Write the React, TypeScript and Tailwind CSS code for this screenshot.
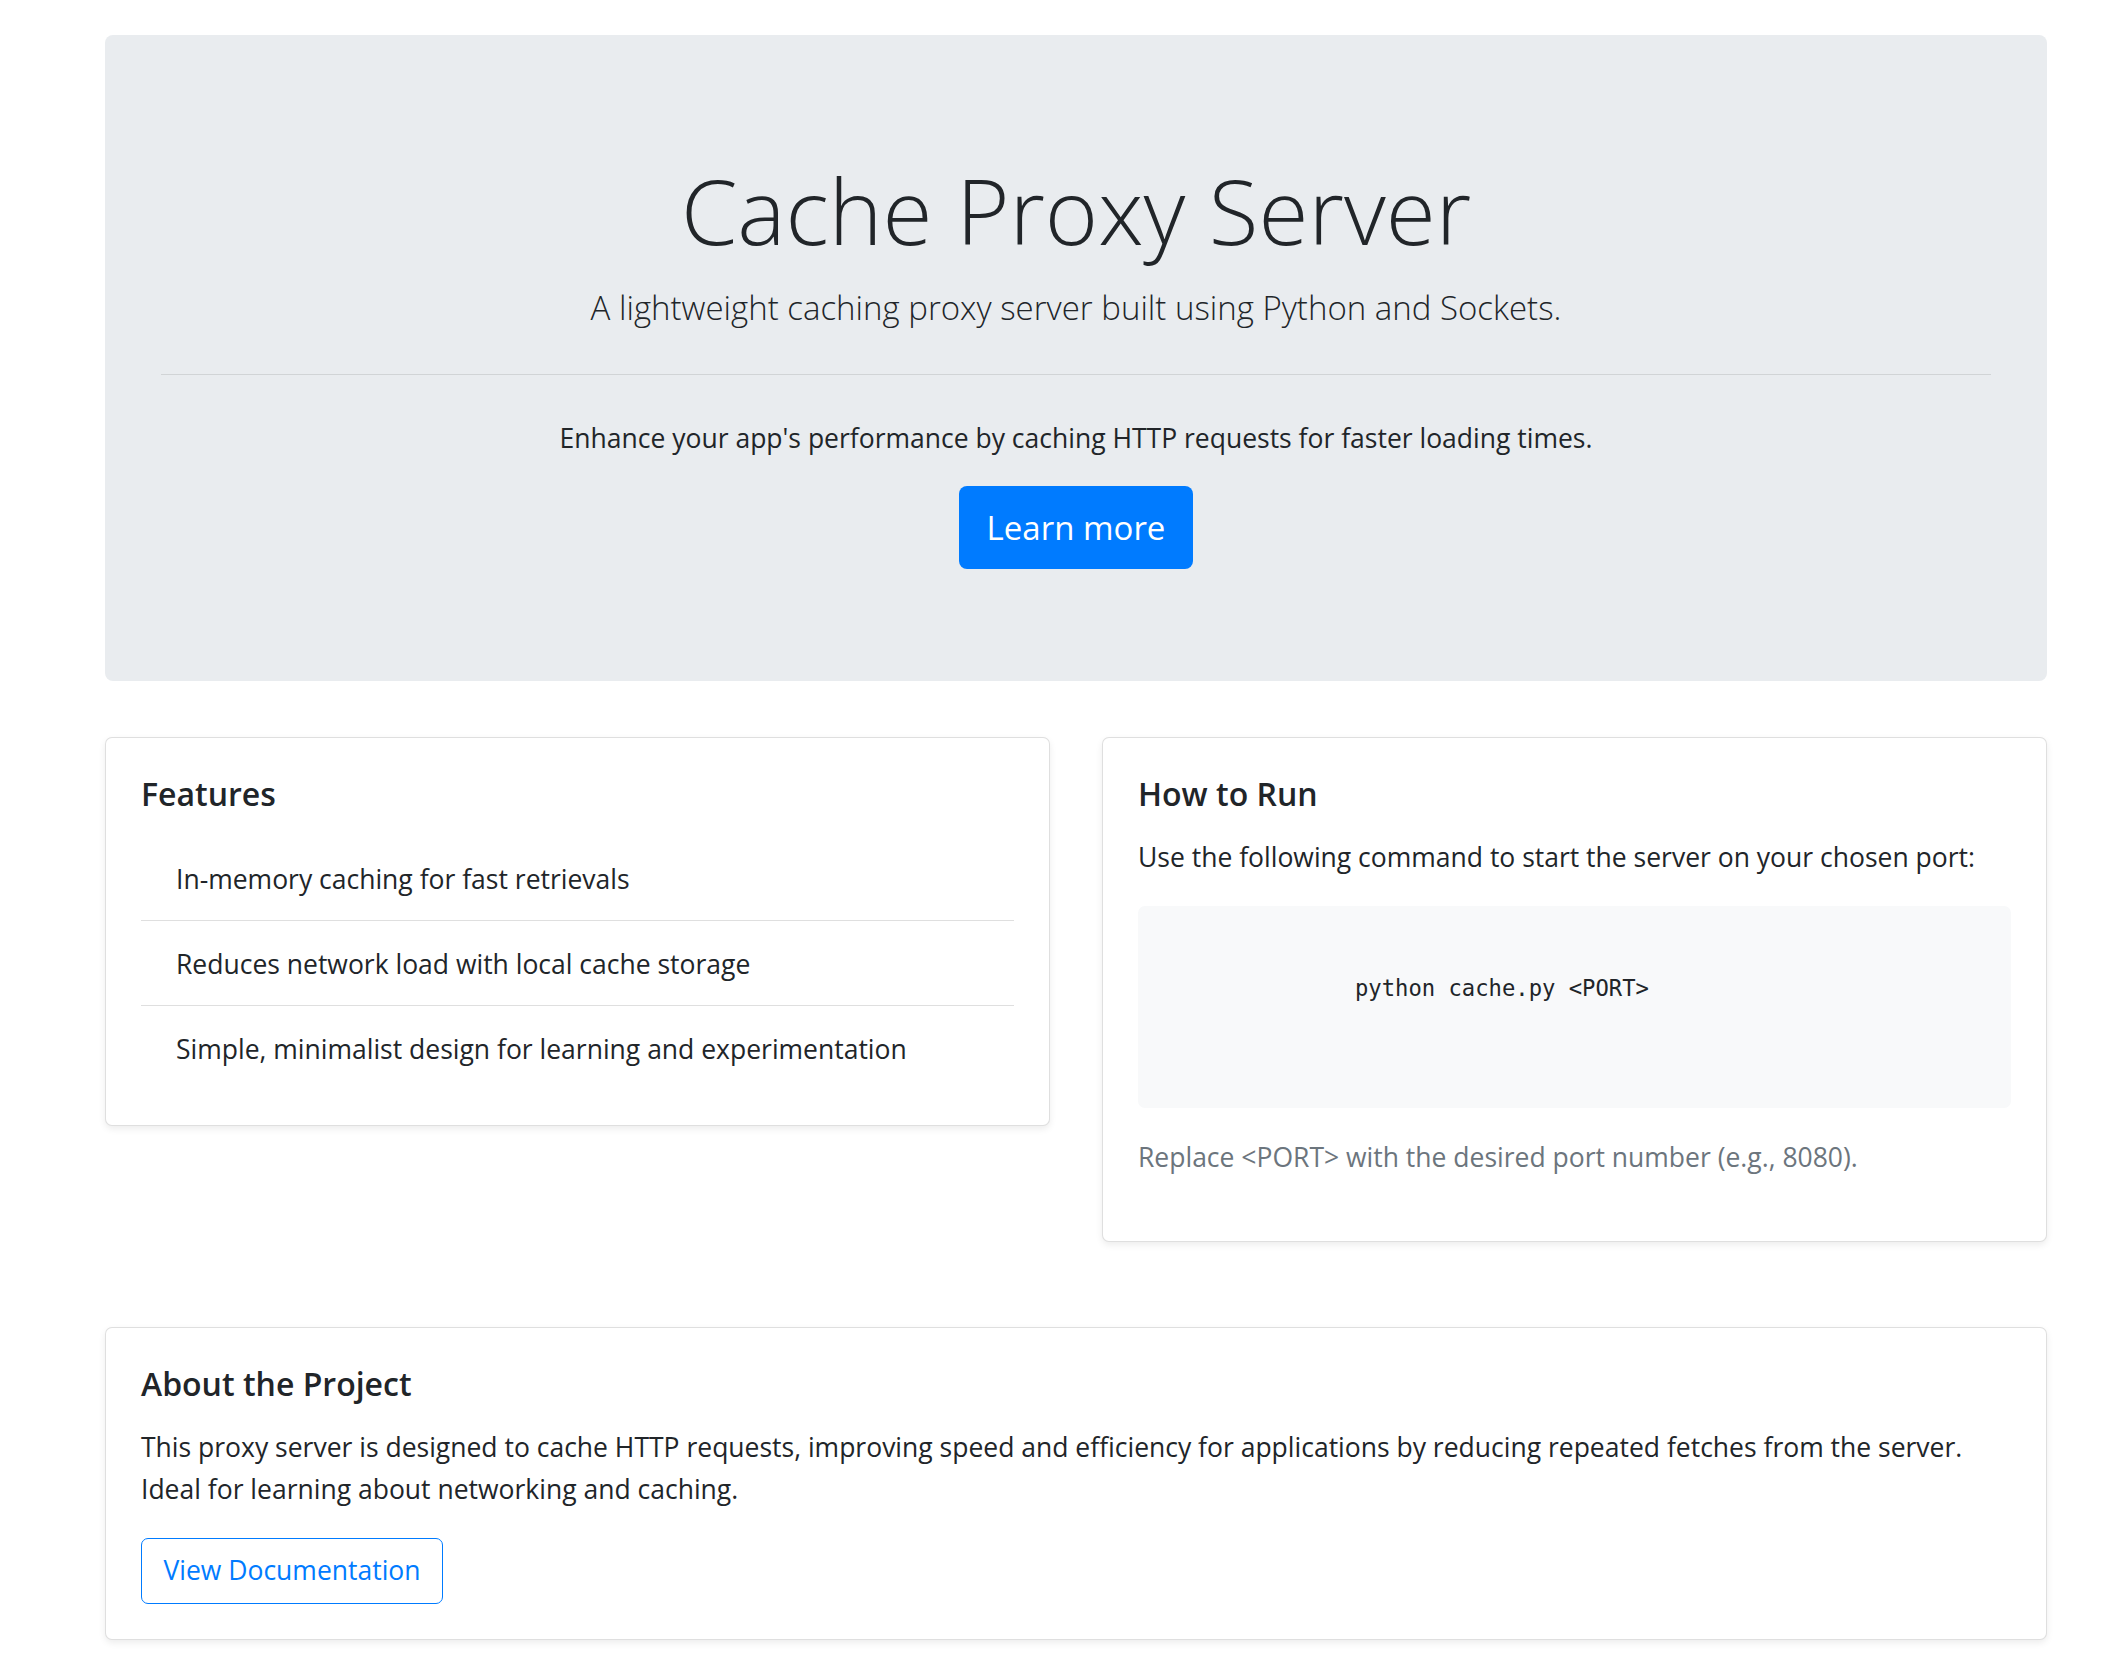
const features = [
  "In-memory caching for fast retrievals",
  "Reduces network load with local cache storage",
  "Simple, minimalist design for learning and experimentation",
];

const sans = { fontFamily: '"Open Sans", "Noto Sans", sans-serif' };

export default function App() {
  return (
    <div className="min-h-screen bg-white text-[#212529]" style={sans}>
      <div className="ml-[105px] w-[1942px] pt-[35px] pb-[36px]">
        {/* jumbotron */}
        <div className="rounded-[8px] bg-[#e9ecef] px-[56px] py-[112px] text-center">
          <h1 className="mt-[4px] text-[91px] font-light leading-[118px]">Cache Proxy Server</h1>
          <p className="mt-[13px] text-[33px] font-light leading-[52px]">
            A lightweight caching proxy server built using Python and Sockets.
          </p>
          <hr className="mt-[40px] border-t border-black/10" />
          <p className="mt-[42px] text-[26.5px] leading-[42px]">
            Enhance your app's performance by caching HTTP requests for faster loading times.
          </p>
          <button className="mt-[27px] h-[83px] w-[234px] rounded-[8px] bg-[#007bff] text-[33px] leading-[52px] text-white">
            Learn more
          </button>
        </div>

        <div className="mt-[56px] flex items-start gap-[52px]">
          <Card>
            <CardTitle>Features</CardTitle>
            <ul>
              {features.map((f, i) => (
                <li
                  key={f}
                  className={`px-[35px] pt-[22px] pb-[20px] text-[26.5px] leading-[42px] ${
                    i < features.length - 1 ? "border-b border-black/[.125]" : ""
                  }`}
                >
                  {f}
                </li>
              ))}
            </ul>
          </Card>

          <Card>
            <CardTitle>How to Run</CardTitle>
            <p className="text-[26.5px] leading-[42px]">
              Use the following command to start the server on your chosen port:
            </p>
            <div
              className="mt-[28px] h-[202px] rounded-[7px] bg-[#f8f9fa] pl-[217px] pt-[64px] text-[22.2px] leading-[37px] text-[#212529]"
              style={{ fontFamily: '"DejaVu Sans Mono", "Liberation Mono", monospace' }}
            >
              python cache.py &lt;PORT&gt;
            </div>
            <p className="mt-[28px] mb-[28px] text-[26.5px] leading-[42px] text-[#6c757d]">
              Replace &lt;PORT&gt; with the desired port number (e.g., 8080).
            </p>
          </Card>
        </div>

        <div className="mt-[85px]">
          <Card>
            <CardTitle>About the Project</CardTitle>
            <p className="text-[26.5px] leading-[42px]">
              This proxy server is designed to cache HTTP requests, improving speed and efficiency for applications by
              reducing repeated fetches from the server. Ideal for learning about networking and caching.
            </p>
            <button className="mt-[28px] h-[66px] w-[302px] rounded-[7px] border border-[#007bff] text-[26.5px] text-[#007bff]">
              View Documentation
            </button>
          </Card>
        </div>
      </div>
    </div>
  );
}

function Card({ children }: { children: React.ReactNode }) {
  return (
    <div className="flex-1 rounded-[7px] border border-black/[.125] bg-white p-[35px] shadow-[0_3px_7px_rgba(0,0,0,0.075)]">
      {children}
    </div>
  );
}

function CardTitle({ children }: { children: React.ReactNode }) {
  return <h5 className="mb-[21px] text-[32px] font-semibold leading-[42px]">{children}</h5>;
}
